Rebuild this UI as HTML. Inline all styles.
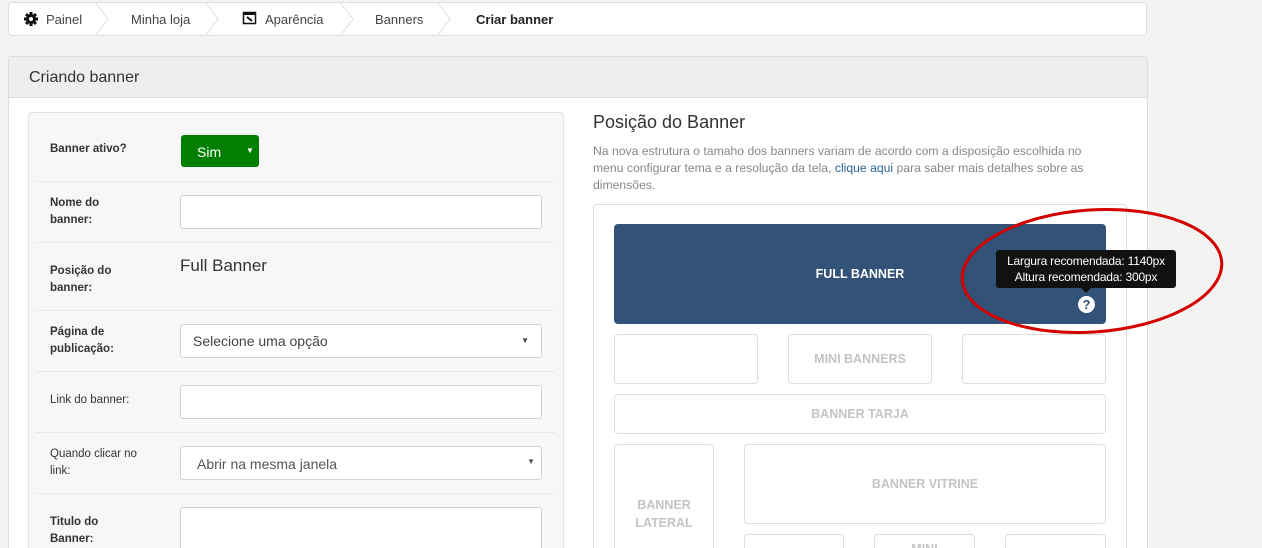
<!DOCTYPE html>
<html style="width:1262px;height:548px;overflow:hidden"><head><meta charset="utf-8"><style>
*{box-sizing:border-box;margin:0;padding:0}
body{width:1262px;height:548px;overflow:hidden;background:#f3f3f2;font-family:"Liberation Sans",sans-serif;color:#333;position:relative}
.a{position:absolute}
.bc{left:8px;top:2px;width:1139px;height:34px;background:#fff;border:1px solid #ddd;border-radius:4px}
.bct{font-size:13px;color:#444;top:12px}
.panel{left:8px;top:56px;width:1140px;height:492px;background:#fff;border:1px solid #ddd;border-bottom:none;border-radius:4px 4px 0 0}
.ph{left:0;top:0;width:100%;height:41px;background:#eeeeed;border-bottom:1px solid #ddd}
.lbox{left:28px;top:112px;width:536px;height:436px;background:#f7f7f7;border:1px solid #e2e2e2;border-bottom:none;border-radius:4px 4px 0 0}
.sep{left:35px;width:520px;height:1px;background:#e8e8e8}
.lbl{left:50px;font-size:11.5px;font-weight:bold;color:#333;line-height:17px}
.lbl.n{font-weight:normal}
.inp{left:180px;width:362px;height:34px;background:#fff;border:1px solid #d2d2d2;border-radius:3px}
.bx{border:1px solid #ddd;border-radius:4px;background:#fff;color:#c4c4c4;font-weight:bold;font-size:12.5px;display:flex;align-items:center;justify-content:center;text-align:center;line-height:18px}
</style></head><body>
<div class="a bc"></div>
<svg class="a" style="left:0;top:2px" width="460" height="34">
<g fill="none" stroke="#e3e3e3" stroke-width="1.2">
<polyline points="95,0 108,17 95,34"/><polyline points="205,0 218,17 205,34"/><polyline points="340,0 353,17 340,34"/><polyline points="437,0 450,17 437,34"/></g>
<g transform="translate(31,17)"><circle r="5" fill="#111"/><g fill="#111"><rect x="-1.5" y="-7" width="3" height="14"/><rect x="-7" y="-1.5" width="14" height="3"/><rect x="-1.5" y="-7" width="3" height="14" transform="rotate(45)"/><rect x="-1.5" y="-7" width="3" height="14" transform="rotate(-45)"/></g><circle r="2" fill="#fff"/></g>
<rect x="243.5" y="10.5" width="12" height="11" fill="#fff" stroke="#111" stroke-width="1.5"/><rect x="243" y="10" width="13" height="3" fill="#111"/><path d="M247 15 L252 19" stroke="#111" stroke-width="2"/>
</svg>
<div class="a bct" style="left:46px">Painel</div>
<div class="a bct" style="left:131px">Minha loja</div>
<div class="a bct" style="left:265px">Aparência</div>
<div class="a bct" style="left:375px">Banners</div>
<div class="a bct" style="left:476px;font-weight:bold;color:#222">Criar banner</div>

<div class="a panel"><div class="a ph"></div>
<div class="a" style="left:20px;top:12px;font-size:16px;color:#333">Criando banner</div></div>

<div class="a lbox"></div>
<div class="a sep" style="top:181px"></div><div class="a sep" style="top:242px"></div><div class="a sep" style="top:310px"></div><div class="a sep" style="top:371px"></div><div class="a sep" style="top:432px"></div><div class="a sep" style="top:493px"></div>
<div class="a lbl" style="top:141px">Banner ativo?</div>
<div class="a" style="left:181px;top:135px;width:78px;height:32px;background:#007f00;border-radius:3px;color:#fff;font-size:14px;padding:9px 0 0 16px">Sim<span style="position:absolute;left:65px;top:11px;font-size:8px">▼</span></div>
<div class="a lbl" style="top:195px">Nome do<br>banner:</div>
<div class="a inp" style="top:195px"></div>
<div class="a lbl" style="top:263px">Posição do<br>banner:</div>
<div class="a" style="left:180px;top:256px;font-size:17px;color:#333">Full Banner</div>
<div class="a lbl" style="top:324px">Página de<br>publicação:</div>
<div class="a inp" style="top:324px;font-size:14px;color:#444;padding:8px 0 0 12px">Selecione uma opção<span style="position:absolute;right:12px;top:11px;font-size:8px">▼</span></div>
<div class="a lbl n" style="top:392px">Link do banner:</div>
<div class="a inp" style="top:385px"></div>
<div class="a lbl n" style="top:446px">Quando clicar no<br>link:</div>
<div class="a inp" style="top:446px;font-size:14px;color:#555;padding:9px 0 0 16px">Abrir na mesma janela<span style="position:absolute;right:6px;top:10px;font-size:8px">▼</span></div>
<div class="a lbl" style="top:514px">Titulo do<br>Banner:</div>
<div class="a inp" style="top:507px;height:41px;border-bottom:none;border-radius:3px 3px 0 0"></div>

<div class="a" style="left:593px;top:112px;font-size:18px;color:#333">Posição do Banner</div>
<div class="a" style="left:593px;top:143px;width:520px;font-size:12.2px;line-height:17px;color:#888">Na nova estrutura o tamaho dos banners variam de acordo com a disposição escolhida no menu configurar tema e a resolução da tela, <span style="color:#2a6496">clique aqui</span> para saber mais detalhes sobre as dimensões.</div>
<div class="a" style="left:593px;top:204px;width:534px;height:344px;border:1px solid #ddd;border-bottom:none;border-radius:4px 4px 0 0;background:#fff"></div>
<div class="a bx" style="left:614px;top:224px;width:492px;height:100px;background:#325278;border-color:#325278;color:#fff">FULL BANNER</div>
<div class="a bx" style="left:614px;top:334px;width:144px;height:50px"></div>
<div class="a bx" style="left:788px;top:334px;width:144px;height:50px">MINI BANNERS</div>
<div class="a bx" style="left:962px;top:334px;width:144px;height:50px"></div>
<div class="a bx" style="left:614px;top:394px;width:492px;height:40px">BANNER TARJA</div>
<div class="a bx" style="left:614px;top:444px;width:100px;height:104px;border-bottom:none;border-radius:4px 4px 0 0;align-items:flex-start;padding-top:51px">BANNER<br>LATERAL</div>
<div class="a bx" style="left:744px;top:444px;width:362px;height:80px">BANNER VITRINE</div>
<div class="a bx" style="left:744px;top:534px;width:100px;height:14px;border-bottom:none;border-radius:4px 4px 0 0"></div>
<div class="a bx" style="left:874px;top:534px;width:101px;height:14px;border-bottom:none;border-radius:4px 4px 0 0;align-items:flex-start;padding-top:5px;overflow:hidden">MINI</div>
<div class="a bx" style="left:1005px;top:534px;width:101px;height:14px;border-bottom:none;border-radius:4px 4px 0 0"></div>
<div class="a" style="left:996px;top:250px;width:180px;height:38px;background:#111;border-radius:3px;color:#fff;font-size:12px;line-height:16px;text-align:center;padding-top:3px;letter-spacing:-0.2px">Largura recomendada: 1140px<br>Altura recomendada: 300px</div>
<div class="a" style="left:1081px;top:288px;width:0;height:0;border-left:5px solid transparent;border-right:5px solid transparent;border-top:5px solid #111"></div>
<div class="a" style="left:1078px;top:296px;width:17px;height:17px;border-radius:50%;background:#fff;color:#325278;font-weight:bold;font-size:13px;text-align:center;line-height:17px">?</div>
<svg class="a" style="left:955px;top:200px" width="275" height="140"><ellipse cx="137" cy="71" rx="130" ry="61" fill="none" stroke="#d40000" stroke-width="3" transform="rotate(-4 137 71)"/></svg>
</body></html>
